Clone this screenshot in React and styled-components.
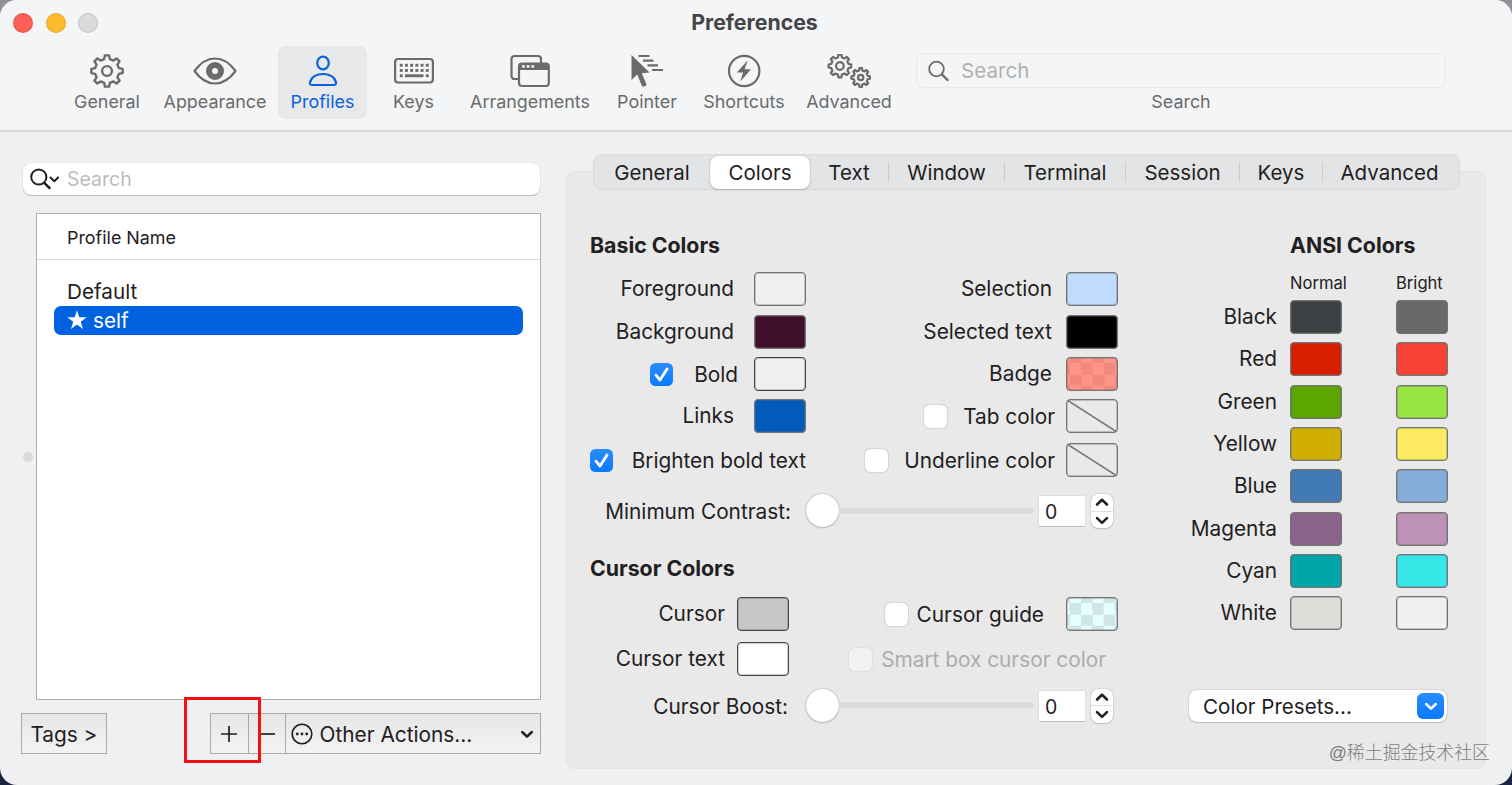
import React, { useState } from "react";
import styled, { createGlobalStyle, css } from "styled-components";

const GlobalStyle = createGlobalStyle`
  * {
    box-sizing: border-box;
  }

  body {
    margin: 0;
    background: linear-gradient(#8f9096 0 50%, #1b2440 50% 100%);
    font-family: Inter, "Liberation Sans", sans-serif;
    font-size: 20.5px;
    color: #1f2022;
  }
`;

const Window = styled.div`
  position: relative;
  width: 1512px;
  height: 785px;
  border-radius: 17px;
  background: #eff0f2;
  overflow: hidden;
`;

const Header = styled.header`
  height: 132px;
  background: #f4f5f7;
  border-bottom: 2px solid #d9dadc;
`;

const TitleBar = styled.div`
  display: grid;
  grid-template-columns: 1fr auto 1fr;
  align-items: center;
  height: 46px;
  padding: 0 16px 0 13px;
`;

const Lights = styled.div`
  display: flex;
  gap: 12.5px;
`;

const Light = styled.span`
  width: 20px;
  height: 20px;
  border-radius: 50%;
  background: ${(props) => props.$color};
  border: 1px solid rgba(0, 0, 0, 0.1);
`;

const Title = styled.h1`
  margin: 0 0 3px;
  font-size: 21.3px;
  font-weight: 700;
  color: #444547;
`;

const Toolbar = styled.nav`
  display: flex;
  padding-left: 62px;
`;

const ToolItem = styled.button`
  display: flex;
  flex-direction: column;
  align-items: center;
  width: ${(props) => props.$width}px;
  height: 73px;
  padding: 8px 0 0;
  border: 0;
  border-radius: 8px;
  background: ${(props) => (props.$active ? "#e7e8ea" : "transparent")};
  color: ${(props) => (props.$active ? "#0a63dc" : "#6a6b6c")};
  font-family: inherit;
  font-size: 17.9px;
  line-height: 22px;
  white-space: nowrap;

  svg {
    display: block;
    margin-bottom: 3px;
  }
`;

const ToolSearch = styled.div`
  display: flex;
  flex-direction: column;
  align-items: center;
  width: 530px;
  margin-left: 12px;
  padding-top: 7px;
  font-size: 17.9px;
  line-height: 22px;
  color: #6a6b6c;
`;

const ToolSearchBox = styled.div`
  display: flex;
  align-items: center;
  gap: 12px;
  width: 100%;
  height: 35px;
  margin-bottom: 3px;
  padding: 1px 0 0 11px;
  border: 1px solid #e6e7e8;
  border-radius: 7px;
  font-size: 20.6px;
  color: #b0b1b2;
`;

const Body = styled.main`
  display: flex;
`;

const Sidebar = styled.aside`
  width: 541px;
  padding: 31px 0 0 21px;
`;

const SearchBox = styled.div`
  display: flex;
  align-items: center;
  gap: 7px;
  width: 517px;
  height: 32px;
  margin-left: 2px;
  padding-left: 7px;
  border-radius: 8px;
  background: #fff;
  box-shadow: 0 0 1px rgba(0, 0, 0, 0.2), 0 1px 1px rgba(0, 0, 0, 0.22);
  font-size: 19.5px;
  color: #bbbcbd;
`;

const ProfileTable = styled.div`
  height: 487px;
  margin: 18px 0 0 15px;
  border: 1.5px solid #b0b0b2;
  background: #fff;
`;

const TableHead = styled.div`
  height: 46px;
  padding-left: 30px;
  border-bottom: 1px solid #dcdcdc;
  font-size: 17.9px;
  line-height: 48px;
  margin-bottom: 17px;
`;

const ProfileRow = styled.div`
  display: flex;
  align-items: center;
  gap: 6px;
  height: 29px;
  margin: 0 17px 0 17px;
  padding: 0 0 1px 13px;
  border-radius: 7px;
  font-size: 20.7px;

  ${(props) =>
    props.$selected &&
    css`
      background: #0062e1;
      color: #fff;
    `}
`;

const Actions = styled.div`
  display: flex;
  height: 41px;
  margin-top: 13px;
`;

const SquareButton = styled.button`
  display: flex;
  align-items: center;
  justify-content: ${(props) => props.$align || "center"};
  width: ${(props) => props.$width}px;
  height: 41px;
  margin-left: ${(props) => props.$offset || 0}px;
  padding: ${(props) => props.$padding || "1px 0 0"};
  border: 1.5px solid #a9aaab;
  background: linear-gradient(#e6e6e6, #f3f3f4);
  color: #1f2022;
  font-family: inherit;
  font-size: 20.8px;
  white-space: nowrap;
`;

const ActionLabel = styled.span`
  flex: 1;
  margin-left: 7px;
  text-align: left;
`;

// Red frame laid over the add button
const Highlight = styled.div`
  position: absolute;
  left: 184px;
  top: 697px;
  width: 77px;
  height: 66px;
  border: 3px solid #f5100f;
`;

const SplitHandle = styled.div`
  position: absolute;
  left: 23px;
  top: 452px;
  width: 10px;
  height: 10px;
  border-radius: 50%;
  background: #d9dadc;
`;

const Panel = styled.section`
  width: 920px;
  height: 598px;
  margin: 39px 0 0 25px;
  border: 1px solid #e2e3e4;
  border-radius: 9px;
  background: #e9e9e9;
`;

const TabBar = styled.div`
  display: flex;
  align-items: center;
  width: 867px;
  height: 36px;
  margin: -18px 0 0 26px;
  border: 1px solid #d9dadb;
  border-radius: 9px;
  background: #e3e4e5;
`;

const Tab = styled.button`
  width: ${(props) => props.$width}px;
  height: 33px;
  padding: 0;
  border: 0;
  border-radius: 8px;
  background: transparent;
  color: #1f2022;
  font-family: inherit;
  font-size: 20.5px;
  white-space: nowrap;

  ${(props) =>
    props.$active &&
    css`
      background: #fff;
      box-shadow: 0 0 1px rgba(0, 0, 0, 0.35), 0 1px 2px rgba(0, 0, 0, 0.2);
    `}
`;

const TabDivider = styled.span`
  width: 1px;
  height: 20px;
  background: #cbcccd;
`;

const PanelBody = styled.div`
  display: flex;
  justify-content: space-between;
  padding: 32px 36px 0 23px;
`;

const Settings = styled.div`
  width: 528px;
`;

const Heading = styled.h2`
  display: flex;
  align-items: center;
  height: ${(props) => props.$height}px;
  margin: 0;
  padding-left: ${(props) => props.$indent || 0}px;
  font-size: 21.3px;
  font-weight: 700;
  white-space: nowrap;
`;

const Row = styled.div`
  display: grid;
  grid-template-columns: 216px 312px;
  height: ${(props) => props.$height}px;
`;

const Cell = styled.div`
  display: flex;
  align-items: center;
  justify-content: flex-end;
  padding-right: ${(props) => props.$inset || 0}px;
`;

const Label = styled.span`
  display: flex;
  justify-content: flex-end;
  width: ${(props) => (props.$width ? `${props.$width}px` : "auto")};
  margin-right: ${(props) => props.$gap || 0}px;
  padding: ${(props) => (props.$width ? "1px 0 0" : "0 0 1px")};
  font-size: 20.8px;
  color: ${(props) => (props.$disabled ? "#acadad" : "#1f2022")};
  white-space: nowrap;
`;

const Box = styled.span`
  display: flex;
  align-items: center;
  justify-content: center;
  width: 23px;
  height: 23px;
  margin: 1px ${(props) => props.$gap}px 0 0;
  border-radius: 5.5px;
  background: ${(props) =>
    props.$checked ? "linear-gradient(#2a8dff, #0a7aff)" : "#fff"};
  box-shadow: ${(props) =>
    props.$checked ? "none" : "0 0 1.5px rgba(0, 0, 0, 0.4)"};
  opacity: ${(props) => (props.$disabled ? 0.45 : 1)};
`;

const Swatch = styled.span`
  flex: none;
  width: 52px;
  height: 34px;
  border: 1px solid ${(props) => (props.$dark ? "#454546" : "#747474")};
  border-radius: 4px;
  background: ${(props) => props.$color};
  box-shadow: inset 0 0 0 1px rgba(110, 110, 110, 0.35);

  ${(props) =>
    props.$checker &&
    css`
      background: repeating-conic-gradient(
          ${props.$checker} 0 25%,
          ${props.$color} 0 50%
        )
        ${props.$phase}px 5px / 22.6px 22.6px;
    `}

  ${(props) =>
    props.$empty &&
    css`
      background: linear-gradient(
        to top right,
        transparent calc(50% - 1.2px),
        #7d7d7d calc(50% - 0.5px),
        #7d7d7d calc(50% + 0.5px),
        transparent calc(50% + 1.2px)
      );
    `}
`;

const SliderRow = styled.div`
  display: flex;
  align-items: center;
  height: ${(props) => props.$height}px;
`;

const Slider = styled.div`
  display: flex;
  align-items: center;
  width: 228px;
  height: 34px;
  margin-bottom: 1px;
`;

const Knob = styled.span`
  width: 33px;
  height: 33px;
  border-radius: 50%;
  background: #fff;
  box-shadow: 0 0 1.5px rgba(0, 0, 0, 0.4), 0 1px 2px rgba(0, 0, 0, 0.15);
`;

const Track = styled.span`
  flex: 1;
  height: 6px;
  border-radius: 0 3px 3px 0;
  background: #dbdbdb;
`;

const NumberField = styled.span`
  width: 46px;
  height: 30px;
  margin: 0 6px 0 5px;
  padding-left: 6px;
  background: #fff;
  box-shadow: 0 0 1px rgba(0, 0, 0, 0.25), 0 1px 0 #c6c6c6;
  font-size: 19.5px;
  line-height: 32px;
`;

const Stepper = styled.span`
  display: flex;
  flex-direction: column;
  width: 22px;
  height: 34px;
  border-radius: 7px;
  background: #fff;
  box-shadow: 0 0 1.5px rgba(0, 0, 0, 0.35), 0 1px 1px rgba(0, 0, 0, 0.12);

  svg {
    flex: 1;
    width: 22px;
  }

  svg + svg {
    border-top: 1px solid #dcdcdc;
  }
`;

const Ansi = styled.div`
  width: 259px;
`;

const AnsiGrid = styled.div`
  display: grid;
  grid-template-columns: 87px 52px 52px;
  grid-template-rows: 28px;
  grid-auto-rows: 42.3px;
  column-gap: 13px;
  align-items: center;

  > :nth-child(3n) {
    margin-left: 41px;
  }

  > :nth-child(3n + 1) {
    justify-self: end;
  }
`;

const AnsiHead = styled.span`
  padding-top: 1px;
  font-size: 16.6px;
`;

const Presets = styled.button`
  display: flex;
  align-items: center;
  justify-content: space-between;
  width: 258px;
  height: 32px;
  margin: 56px 0 0 -1px;
  padding: 0 3px 0 14px;
  border: 0;
  border-radius: 8px;
  background: #fff;
  box-shadow: 0 0 1.5px rgba(0, 0, 0, 0.35), 0 1px 1px rgba(0, 0, 0, 0.12);
  color: #1f2022;
  font-family: inherit;
  font-size: 20.6px;
`;

const PresetsArrow = styled.span`
  display: flex;
  align-items: center;
  justify-content: center;
  width: 27px;
  height: 26px;
  border-radius: 6px;
  background: linear-gradient(#2a8dff, #0a7aff);
`;

const Watermark = styled.div`
  position: absolute;
  right: 22px;
  bottom: 20px;
  font-family: "Liberation Sans", "Noto Sans CJK SC", sans-serif;
  font-size: 17.9px;
  font-weight: 300;
  line-height: 24px;
  color: #7c7d7e;
`;

function gearPath(cx, cy, outer, inner, teeth = 8) {
  const step = (Math.PI * 2) / teeth;
  const corners = [
    [-0.3, inner],
    [-0.17, outer],
    [0.17, outer],
    [0.3, inner],
  ];
  const points = [];
  for (let i = 0; i < teeth; i++) {
    corners.forEach(([offset, r]) => {
      const a = i * step + offset * step - Math.PI / 2;
      points.push(
        `${(cx + r * Math.cos(a)).toFixed(2)} ${(cy + r * Math.sin(a)).toFixed(2)}`
      );
    });
  }
  return `M${points.join("L")}Z`;
}

const Icon = ({ width, children }) => (
  <svg
    width={width}
    height="34"
    viewBox={`0 0 ${width} 34`}
    fill="none"
    stroke="currentColor"
    strokeWidth="2.2"
    strokeLinecap="round"
    strokeLinejoin="round"
  >
    {children}
  </svg>
);

const GearIcon = () => (
  <Icon width={34}>
    <path d={gearPath(17, 17, 15.8, 12.2)} strokeWidth="2.4" />
    <circle cx="17" cy="17" r="4.9" strokeWidth="2.4" />
  </Icon>
);

const EyeIcon = () => (
  <Icon width={44}>
    <path d="M1.5 17C8 8 14.5 4.5 22 4.5S36 8 42.5 17C36 26 29.5 29.5 22 29.5S8 26 1.5 17Z" />
    <circle cx="22" cy="17" r="6" strokeWidth="6" />
  </Icon>
);

const PersonIcon = () => (
  <Icon width={34}>
    <ellipse cx="17" cy="9" rx="5.8" ry="6.3" />
    <path d="M5.8 31C4 31 3.8 29.5 4 28.5C5 23 10.5 20 17 20S29 23 30 28.5C30.2 29.5 30 31 28.2 31Z" />
  </Icon>
);

const KeyboardIcon = () => (
  <Icon width={40}>
    <rect x="1.1" y="5" width="37.8" height="23.500" rx="3" />
    <g stroke="none" fill="currentColor">
      {[0, 1, 2, 3, 4, 5].map((i) => (
        <React.Fragment key={i}>
          <rect x={5.8 + i * 5.2} y="9.8" width="2.9" height="2.9" />
          <rect x={5.8 + i * 5.2} y="15" width="2.9" height="2.9" />
        </React.Fragment>
      ))}
      <rect x="5.8" y="20.3" width="2.9" height="2.9" />
      <rect x="11" y="20.3" width="18.5" height="2.9" />
      <rect x="31.8" y="20.3" width="2.9" height="2.9" />
    </g>
  </Icon>
);

const WindowsIcon = () => (
  <Icon width={40}>
    <path d="M9 25H4.5A3 3 0 0 1 1.5 22V5A3 3 0 0 1 4.5 2H28A3 3 0 0 1 31 5V9" />
    <rect x="9" y="9.5" width="29.8" height="22.5" rx="3" />
    <path
      d="M9 16V12.500a3 3 0 0 1 3-3H36a3 3 0 0 1 3 3V16Z"
      fill="currentColor"
      strokeWidth="0"
    />
    <g stroke="none" fill="#f4f5f7">
      <rect x="12" y="11.2" width="2.8" height="2.5" />
      <rect x="16.7" y="11.2" width="2.8" height="2.5" />
      <rect x="21.4" y="11.2" width="2.8" height="2.5" />
    </g>
  </Icon>
);

const PointerIcon = () => (
  <Icon width={34}>
    <path
      d="M1.5 1V26L7.2 20.5L12 32Q12.5 33 13.5 32.600L15.8 31.700Q16.800 31.200 16.400 30.200L11.8 19.200L19.5 18.500Z"
      fill="currentColor"
      stroke="none"
    />
    <path d="M8.5 2H19.5M13 6.7H23.5M17.5 11.400H28M22 16H33" strokeLinecap="butt" />
  </Icon>
);

const BoltIcon = () => (
  <Icon width={34}>
    <circle cx="17.2" cy="17" r="15.2" />
    <path
      d="M20.5 6.5L9.8 18.5H16L13.3 27.5L24 15.300H17.7Z"
      fill="currentColor"
      stroke="none"
    />
  </Icon>
);

const GearsIcon = () => (
  <Icon width={44}>
    <path d={gearPath(12.9, 12, 11.4, 8.8)} />
    <circle cx="12.9" cy="12" r="3.8" />
    <path d={gearPath(33.7, 23.5, 9.4, 7.2)} />
    <circle cx="33.7" cy="23.5" r="2.7" />
  </Icon>
);

const Chevron = ({ up, color = "#1f2022" }) => (
  <svg width="14" height="16" viewBox="0 0 14 16" fill="none">
    <path
      d={up ? "M2.2 10.2L7 5.6L11.8 10.2" : "M2.2 6L7 10.6L11.8 6"}
      stroke={color}
      strokeWidth="2.5"
      strokeLinecap="round"
      strokeLinejoin="round"
    />
  </svg>
);

const Checkbox = ({ checked, disabled, gap }) => (
  <Box $checked={checked} $disabled={disabled} $gap={gap}>
    {checked && (
      <svg width="17" height="17" viewBox="0 0 17 17" fill="none">
        <path
          d="M3 9.2L7 14L14 3"
          stroke="#fff"
          strokeWidth="2.8"
          strokeLinecap="round"
          strokeLinejoin="round"
        />
      </svg>
    )}
  </Box>
);

const tools = [
  { name: "General", width: 90, icon: <GearIcon /> },
  { name: "Appearance", width: 126, icon: <EyeIcon /> },
  { name: "Profiles", width: 89, icon: <PersonIcon /> },
  { name: "Keys", width: 93, icon: <KeyboardIcon /> },
  { name: "Arrangements", width: 140, icon: <WindowsIcon /> },
  { name: "Pointer", width: 94, icon: <PointerIcon /> },
  { name: "Shortcuts", width: 100, icon: <BoltIcon /> },
  { name: "Advanced", width: 110, icon: <GearsIcon /> },
];

const tabs = [
  { name: "General", width: 116 },
  { name: "Colors", width: 100 },
  { name: "Text", width: 78, divider: true },
  { name: "Window", width: 115, divider: true },
  { name: "Terminal", width: 120, divider: true },
  { name: "Session", width: 113, divider: true },
  { name: "Keys", width: 82, divider: true },
  { name: "Advanced", width: 133 },
];

const ansiColors = [
  ["Black", "#3b4143", "#686a67"],
  ["Red", "#d81e00", "#f84135"],
  ["Green", "#5ba700", "#98e443"],
  ["Yellow", "#cfae00", "#fceb60"],
  ["Blue", "#417ab4", "#84aed9"],
  ["Magenta", "#89658e", "#bc93b7"],
  ["Cyan", "#00a7aa", "#37e7e8"],
  ["White", "#dbddd8", "#f0f0f0"],
];

function ValueSlider({ label, labelWidth, gap, height }) {
  return (
    <SliderRow $height={height}>
      <Label $width={labelWidth} $gap={gap}>
        {label}
      </Label>
      <Slider>
        <Knob />
        <Track />
      </Slider>
      <NumberField>0</NumberField>
      <Stepper>
        <Chevron up />
        <Chevron />
      </Stepper>
    </SliderRow>
  );
}

function Profiles() {
  return (
    <Sidebar>
      <SearchBox>
        <svg width="30" height="24" viewBox="0 0 30 24" fill="none" stroke="#1f2022" strokeLinecap="round">
          <circle cx="8.8" cy="10" r="7.6" strokeWidth="2" />
          <path d="M14.3 15.8L19.5 21" strokeWidth="2.5" />
          <path d="M20.5 10.5L24.3 14.3L28.1 10.5" strokeWidth="2" strokeLinejoin="round" />
        </svg>
        Search
      </SearchBox>
      <ProfileTable>
        <TableHead>Profile Name</TableHead>
        <ProfileRow>Default</ProfileRow>
        <ProfileRow $selected>
          <svg width="20" height="20" viewBox="0 0 20 20" fill="#fff">
            <path d="M10 0.3L12.3 7.3H19.7L13.8 11.7L16 19L10 14.6L4 19L6.2 11.7L0.3 7.3H7.7Z" />
          </svg>
          self
        </ProfileRow>
      </ProfileTable>
      <Actions>
        <SquareButton $width={86}>Tags &gt;</SquareButton>
        <SquareButton $width={39} $offset={103}>
          <svg width="18" height="18" viewBox="0 0 18 18" stroke="#1f2022" strokeWidth="1.7">
            <path d="M1 9H17M9 1V17" />
          </svg>
        </SquareButton>
        <SquareButton $width={38} $offset={-1}>
          <svg width="18" height="18" viewBox="0 0 18 18" stroke="#1f2022" strokeWidth="1.7">
            <path d="M1 9H17" />
          </svg>
        </SquareButton>
        <SquareButton $width={257} $offset={-1} $align="flex-start" $padding="1px 6px 0 5px">
          <svg width="22" height="22" viewBox="0 0 22 22" fill="#1f2022">
            <circle cx="11" cy="11" r="9.8" fill="none" stroke="#1f2022" strokeWidth="1.6" />
            <circle cx="6.3" cy="11" r="1.4" />
            <circle cx="11" cy="11" r="1.4" />
            <circle cx="15.7" cy="11" r="1.4" />
          </svg>
          <ActionLabel>Other Actions...</ActionLabel>
          <Chevron />
        </SquareButton>
      </Actions>
    </Sidebar>
  );
}

function ColorSettings() {
  return (
    <Settings>
      <Heading $height={46}>Basic Colors</Heading>
      <Row $height={42}>
        <Cell>
          <Label $gap={20}>Foreground</Label>
          <Swatch $color="#f0f0f0" />
        </Cell>
        <Cell>
          <Label $gap={14}>Selection</Label>
          <Swatch $color="#bfdcff" />
        </Cell>
      </Row>
      <Row $height={43}>
        <Cell>
          <Label $gap={20}>Background</Label>
          <Swatch $color="#3f0f2c" />
        </Cell>
        <Cell>
          <Label $gap={14}>Selected text</Label>
          <Swatch $color="#000" />
        </Cell>
      </Row>
      <Row $height={42}>
        <Cell>
          <Checkbox checked gap={21} />
          <Label $width={44} $gap={16}>
            Bold
          </Label>
          <Swatch $color="#f0f0f0" $dark />
        </Cell>
        <Cell>
          <Label $gap={14}>Badge</Label>
          <Swatch $color="#ff9587" $checker="#f3897d" $phase={3} />
        </Cell>
      </Row>
      <Row $height={42}>
        <Cell>
          <Label $gap={20}>Links</Label>
          <Swatch $color="#005bbb" />
        </Cell>
        <Cell>
          <Checkbox gap={18} />
          <Label $width={90} $gap={11}>
            Tab color
          </Label>
          <Swatch $empty />
        </Cell>
      </Row>
      <Row $height={46}>
        <Cell>
          <Checkbox checked gap={17} />
          <Label $width={176}>Brighten bold text</Label>
        </Cell>
        <Cell>
          <Checkbox gap={17} />
          <Label $width={150} $gap={11}>
            Underline color
          </Label>
          <Swatch $empty />
        </Cell>
      </Row>
      <ValueSlider label="Minimum Contrast:" labelWidth={201} gap={15} height={56} />
      <Heading $height={58}>Cursor Colors</Heading>
      <Row $height={32}>
        <Cell $inset={17}>
          <Label $gap={12}>Cursor</Label>
          <Swatch $color="#c6c6c6" $dark />
        </Cell>
        <Cell>
          <Checkbox gap={10} />
          <Label $width={126} $gap={22}>
            Cursor guide
          </Label>
          <Swatch $color="#e5ffff" $checker="#d0e5e5" $phase={14} />
        </Cell>
      </Row>
      <Row $height={59}>
        <Cell $inset={17}>
          <Label $gap={12}>Cursor text</Label>
          <Swatch $color="#fff" $dark />
        </Cell>
        <Cell $inset={12}>
          <Checkbox disabled gap={10} />
          <Label $width={224} $disabled>
            Smart box cursor color
          </Label>
        </Cell>
      </Row>
      <ValueSlider label="Cursor Boost:" labelWidth={198} gap={18} height={35} />
    </Settings>
  );
}

function AnsiSettings() {
  return (
    <Ansi>
      <Heading $height={46} $indent={100}>
        ANSI Colors
      </Heading>
      <AnsiGrid>
        <span />
        <AnsiHead>Normal</AnsiHead>
        <AnsiHead>Bright</AnsiHead>
        {ansiColors.map(([name, normal, bright]) => (
          <React.Fragment key={name}>
            <Label>{name}</Label>
            <Swatch $color={normal} />
            <Swatch $color={bright} />
          </React.Fragment>
        ))}
      </AnsiGrid>
      <Presets>
        Color Presets...
        <PresetsArrow>
          <Chevron color="#fff" />
        </PresetsArrow>
      </Presets>
    </Ansi>
  );
}

export default function App() {
  const [tool, setTool] = useState("Profiles");
  const [tab, setTab] = useState("Colors");

  return (
    <Window>
      <GlobalStyle />
      <Header>
        <TitleBar>
          <Lights>
            <Light $color="#fe5f57" />
            <Light $color="#febb2e" />
            <Light $color="#d9dadc" />
          </Lights>
          <Title>Preferences</Title>
        </TitleBar>
        <Toolbar>
          {tools.map(({ name, width, icon }) => (
            <ToolItem
              key={name}
              $width={width}
              $active={tool === name}
              onClick={() => setTool(name)}
            >
              {icon}
              {name}
            </ToolItem>
          ))}
          <ToolSearch>
            <ToolSearchBox>
              <svg width="21" height="22" viewBox="0 0 21 22" fill="none" stroke="#6a6b6c" strokeLinecap="round">
                <circle cx="8.5" cy="9" r="7.3" strokeWidth="1.8" />
                <path d="M14 14.5L19.5 20" strokeWidth="2.4" />
              </svg>
              Search
            </ToolSearchBox>
            Search
          </ToolSearch>
        </Toolbar>
      </Header>
      <Body>
        <Profiles />
        <Panel>
          <TabBar>
            {tabs.map(({ name, width, divider }) => (
              <React.Fragment key={name}>
                <Tab $width={width} $active={tab === name} onClick={() => setTab(name)}>
                  {name}
                </Tab>
                {divider && <TabDivider />}
              </React.Fragment>
            ))}
          </TabBar>
          <PanelBody>
            <ColorSettings />
            <AnsiSettings />
          </PanelBody>
        </Panel>
      </Body>
      <SplitHandle />
      <Highlight />
      <Watermark>@稀土掘金技术社区</Watermark>
    </Window>
  );
}
